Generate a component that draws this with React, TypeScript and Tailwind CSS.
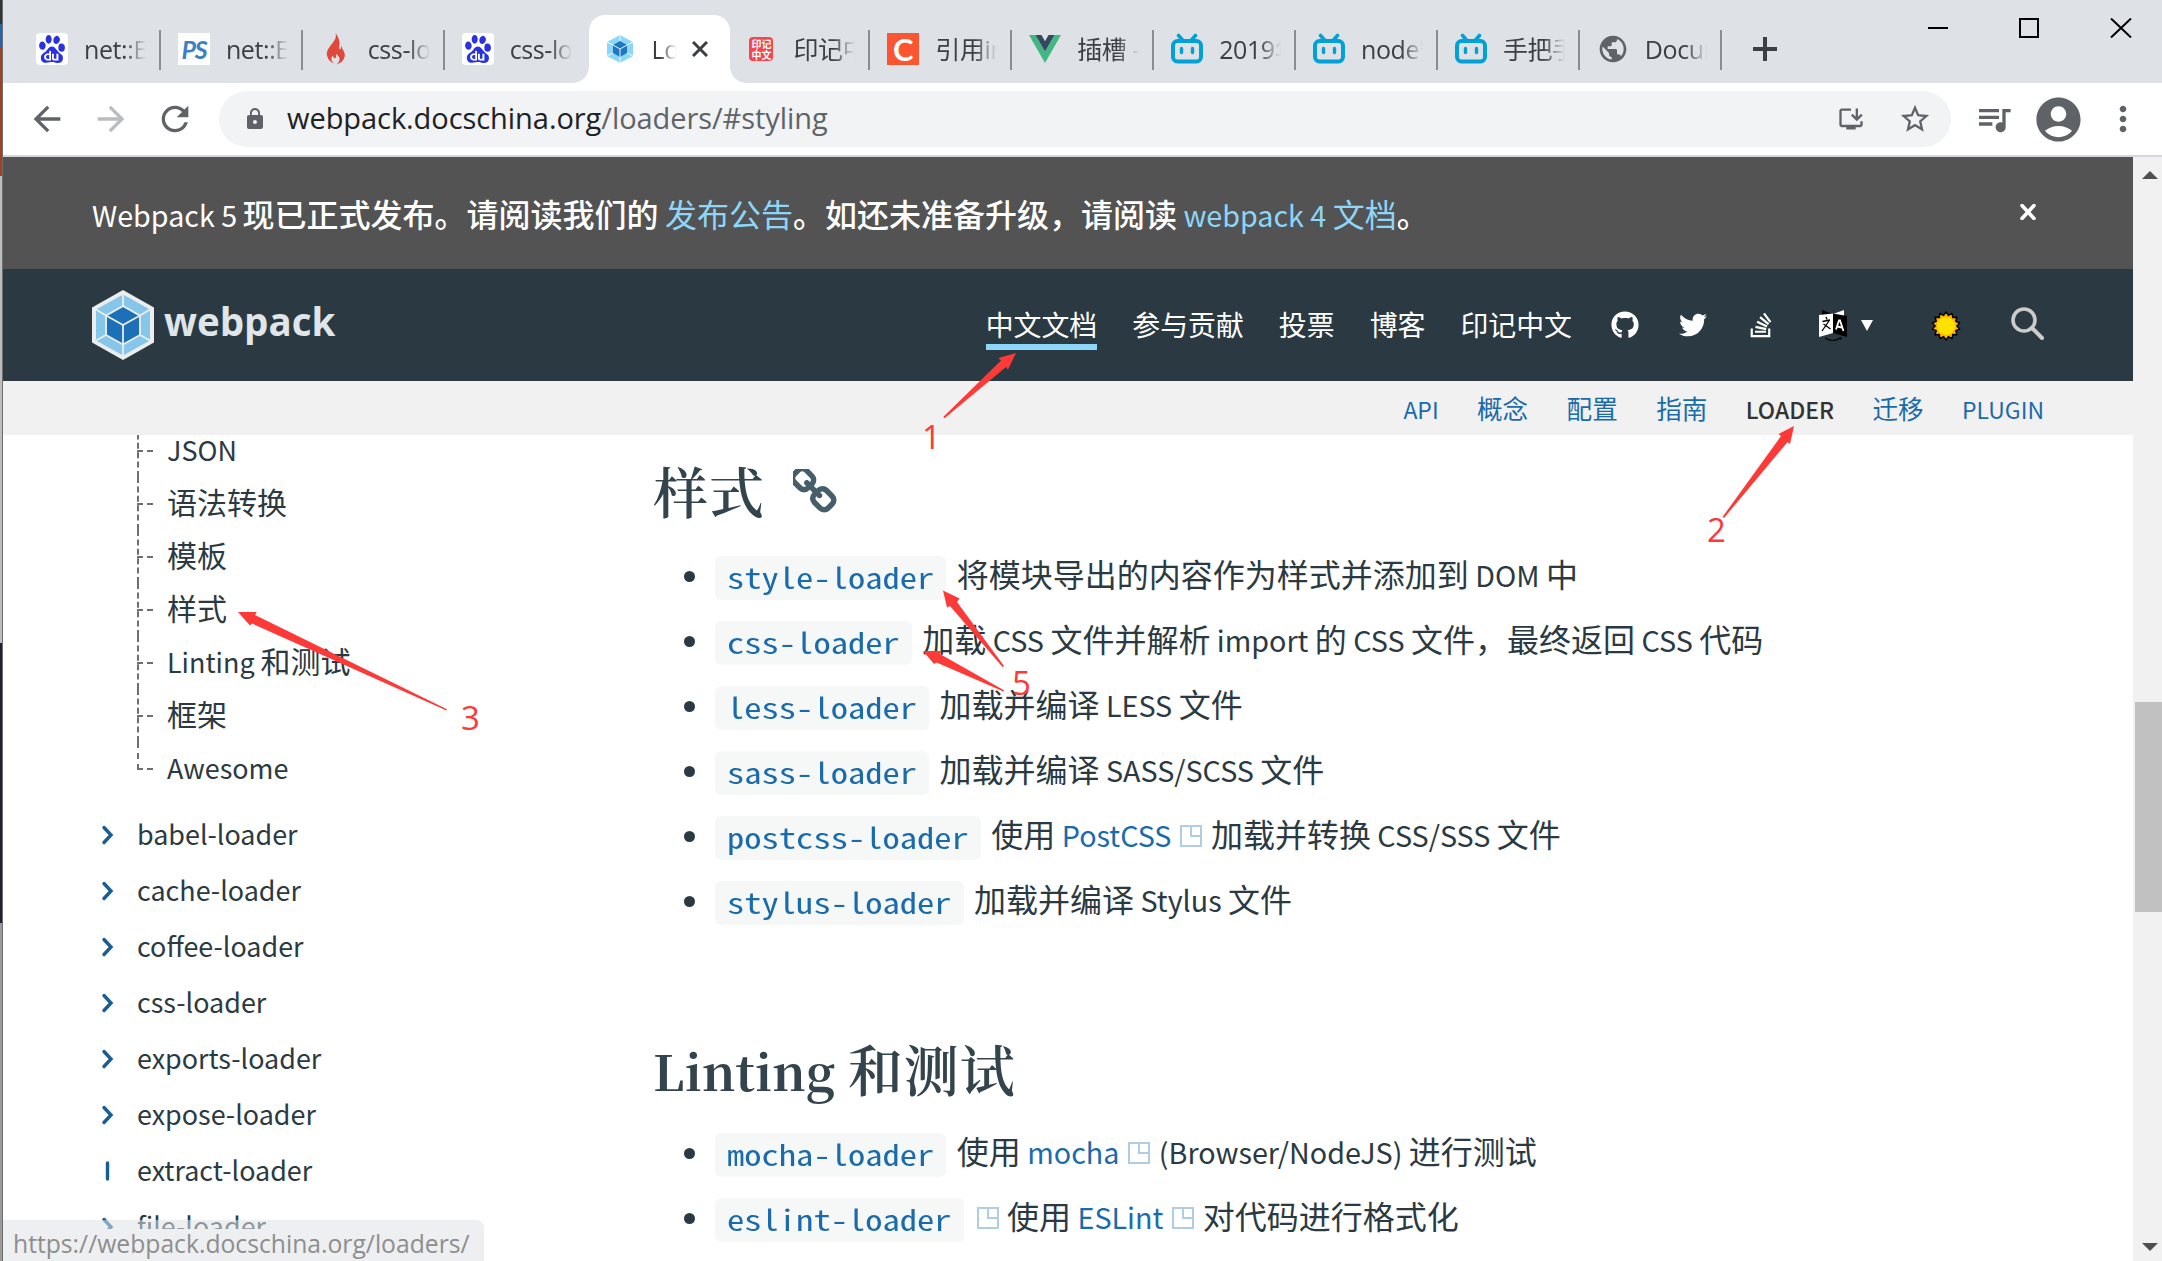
import React from "react";
import {
  MdArrowBack,
  MdArrowForward,
  MdRefresh,
  MdLock,
  MdInstallDesktop,
  MdStarBorder,
  MdQueueMusic,
  MdAccountCircle,
  MdMoreVert,
  MdPublic,
} from "react-icons/md";
import { FaGithub, FaTwitter, FaStackOverflow } from "react-icons/fa";
import { SiBaidu } from "react-icons/si";

const ARROW = "#fd3a37";

/* Latin runs are set a little smaller than the CJK glyphs around them. */
function Mix({ children }: { children: string }) {
  const parts = children.split(/([\x20-\x7e]+)/).filter(Boolean);
  return (
    <>
      {parts.map((p, i) =>
        /^[\x20-\x7e]/.test(p) ? (
          <span key={i} className="whitespace-pre text-[0.897em]">
            {p}
          </span>
        ) : (
          <span key={i}>{p}</span>
        ),
      )}
    </>
  );
}

function WebpackCube({ className, rim }: { className: string; rim: string }) {
  return (
    <svg viewBox="0 0 62 70" className={className} preserveAspectRatio="none">
      <path d="M31 0L62 17.5V52.5L31 70L0 52.5V17.5Z" fill={rim} />
      <path d="M31 4.5L58 19.5V50.5L31 65.5L4 50.5V19.5Z" fill="#86c6e9" />
      <path d="M31 17L47 26V45L31 54L15 45V26Z" fill="#1c70b7" />
      <g stroke={rim} strokeWidth="1.8" fill="none">
        <path d="M31 16L48 25.5V45L31 54.5L14 45V25.5Z" />
        <path d="M31 4V16M31 54V66M4 19.5L14 25.5L31 35L48 25.5L58 19.5M31 35V54M4 50.5L14 45M58 50.5L48 45" />
      </g>
    </svg>
  );
}

function WebpackFavicon() {
  return (
    <svg viewBox="0 0 26 28" className="h-7 w-[26px]">
      <path d="M13 0L26 7V21L13 28L0 21V7Z" fill="#8dd6f9" />
      <path d="M13 6L20 10V18L13 22L6 18V10Z" fill="#1c78c0" />
      <path d="M13 0V6M13 22V28M0 7L6 10L13 14L20 10L26 7M13 14V22M0 21L6 18M26 21L20 18" stroke="white" strokeWidth="0.9" fill="none" />
    </svg>
  );
}

function BilibiliIcon() {
  return (
    <svg viewBox="0 0 32 32" className="h-8 w-8" fill="none" stroke="#00a1d6">
      <rect x="2" y="8" width="28" height="20.5" rx="4.5" strokeWidth="4" />
      <path d="M7.5 2.5L11.5 7M24.500 2.500L20.500 7" strokeWidth="3.600" strokeLinecap="round" />
      <path d="M10.500 15.500V19.500M21.500 15.500V19.500" strokeWidth="3.400" strokeLinecap="round" />
    </svg>
  );
}

function VueIcon() {
  return (
    <svg viewBox="0 0 32 28" className="h-7 w-8">
      <path d="M0 0H6.500L16 16.500L25.500 0H32L16 28Z" fill="#41b883" />
      <path d="M6.500 0H12.500L16 6.200L19.500 0H25.500L16 16.500Z" fill="#35495e" />
    </svg>
  );
}

function BaiduIcon() {
  return (
    <span className="flex h-8 w-8 items-center justify-center rounded bg-white">
      <SiBaidu className="h-7 w-7 text-[#2932e1]" />
    </span>
  );
}

type Tab = { icon: React.ReactNode; title: string; active?: boolean; sep?: boolean };

const tabs: Tab[] = [
  { icon: <BaiduIcon />, title: "net::ERR", sep: true },
  {
    icon: (
      <span className="flex h-8 w-8 items-center justify-center bg-white font-['Lato',sans-serif] text-[25px] font-bold leading-none tracking-tighter text-[#3a80c3] italic">
        PS
      </span>
    ),
    title: "net::ERR",
    sep: true,
  },
  {
    icon: (
      <svg viewBox="0 0 20 32" className="h-8 w-5" fill="#e0483e">
        <path d="M9.500 0C11 5 8 8 5 12C1 17 0 20 1.500 24C2.500 27 5 29.500 8 30.500C5 28 4.500 25 7 22.500C7 24.500 8.500 25.500 9.500 25C11 24 9.500 22.500 10.500 20.500C11 22.500 14 23.500 13.500 26.500C13.300 28.500 12 30 10.500 31.500C15 30 18.500 27 18.800 22.500C19 18 16 17 15.500 13C14.500 14 15 15.500 14.500 16.500C12 16 14 12.500 13.500 9C13 5 11 2 9.500 0Z" />
      </svg>
    ),
    title: "css-loader",
    sep: true,
  },
  { icon: <BaiduIcon />, title: "css-loader" },
  { icon: <WebpackFavicon />, title: "Loader", active: true },
  {
    icon: (
      <span className="flex h-6 w-6 flex-col items-center justify-center rounded-sm bg-[#f8454d] font-['Noto_Sans_CJK_SC',sans-serif] text-[10px] font-bold leading-[11px] text-white">
        <span>印记</span>
        <span>中文</span>
      </span>
    ),
    title: "印记中文",
    sep: true,
  },
  {
    icon: (
      <span className="flex h-8 w-8 items-center justify-center bg-[#fc5531] font-['Lato',sans-serif] text-[31px] font-bold leading-none text-white">
        C
      </span>
    ),
    title: "引用import",
    sep: true,
  },
  { icon: <VueIcon />, title: "插槽 — Vue", sep: true },
  { icon: <BilibiliIcon />, title: "2019年", sep: true },
  { icon: <BilibiliIcon />, title: "node安装", sep: true },
  { icon: <BilibiliIcon />, title: "手把手教", sep: true },
  { icon: <MdPublic className="h-[34px] w-[34px] text-[#5f6368]" />, title: "Docum", sep: true },
];

function TabItem({ tab }: { tab: Tab }) {
  return (
    <div
      className={
        tab.active
          ? "relative flex h-[68px] w-[141.9px] shrink-0 items-center self-end rounded-t-2xl bg-white pl-[15px]"
          : "relative flex h-[68px] w-[141.9px] shrink-0 items-center self-end pl-[15px]"
      }
    >
      {tab.active && (
        <>
          <span className="absolute bottom-0 -left-4 h-4 w-4 bg-[radial-gradient(circle_at_0_0,transparent_15.5px,white_16px)]" />
          <span className="absolute bottom-0 -right-4 h-4 w-4 bg-[radial-gradient(circle_at_100%_0,transparent_15.5px,white_16px)]" />
        </>
      )}
      <span className="flex h-8 w-8 shrink-0 items-center justify-center">{tab.icon}</span>
      <span
        className={
          tab.active
            ? "ml-4 w-[26px] overflow-hidden whitespace-nowrap text-[25px] leading-9 tracking-[-0.4px] text-[#3c4043] [mask-image:linear-gradient(to_right,black_30%,transparent_95%)]"
            : "ml-4 w-[62px] overflow-hidden whitespace-nowrap text-[25px] leading-9 tracking-[-0.4px] text-[#3c4043] [mask-image:linear-gradient(to_right,black_65%,transparent_100%)]"
        }
      >
        {tab.title}
      </span>
      {tab.active && (
        <svg viewBox="0 0 16 16" className="ml-3.5 h-4 w-4" stroke="#3c4043" strokeWidth="3">
          <path d="M1 1L15 15M15 1L1 15" />
        </svg>
      )}
      {tab.sep && <span className="absolute top-[15px] right-0.5 h-10 w-0.5 bg-[#8a8d92]" />}
    </div>
  );
}

function TabStrip() {
  return (
    <div className="flex h-[83px] bg-[#dee1e6] pl-[18px] font-['Open_Sans','Noto_Sans_CJK_SC',sans-serif]">
      {tabs.map((t, i) => (
        <TabItem key={i} tab={t} />
      ))}
      <svg viewBox="0 0 24 24" className="mt-[37px] ml-[29px] h-6 w-6" stroke="#3c4043" strokeWidth="4">
        <path d="M12 0V24M0 12H24" />
      </svg>
      <svg
        viewBox="0 0 204 20"
        className="mt-[18px] mr-[30px] ml-auto h-5 w-[204px]"
        fill="none"
        stroke="black"
        strokeWidth="2"
      >
        <path d="M0 10H20" />
        <rect x="92" y="1" width="18" height="18" />
        <path d="M183 0.500L203 19.500M203 0.500L183 19.500" />
      </svg>
    </div>
  );
}

function Toolbar() {
  return (
    <div className="flex h-[72px] items-center bg-white pl-6">
      <MdArrowBack className="h-10 w-10 text-[#5f6368]" />
      <MdArrowForward className="ml-6 h-10 w-10 text-[#babcbe]" />
      <MdRefresh className="ml-6 h-10 w-10 text-[#5f6368]" />
      <div className="ml-6 flex h-14 w-[1732px] items-center rounded-full bg-[#f1f3f4] pl-6">
        <MdLock className="h-6 w-6 text-[#5f6368]" />
        <div className="ml-5 pb-0.5 font-['Open_Sans',sans-serif] text-[29px] leading-10 tracking-[-0.06px] text-[#202124]">
          webpack.docschina.org<span className="text-[#5f6368]">/loaders/#styling</span>
        </div>
        <MdInstallDesktop className="ml-auto h-7 w-7 text-[#5f6368]" />
        <MdStarBorder className="mr-[19px] ml-[33px] h-[34px] w-[34px] text-[#5f6368]" />
      </div>
      <MdQueueMusic className="ml-[23px] h-10 w-10 text-[#5f6368]" />
      <MdAccountCircle className="ml-[18px] h-[53px] w-[53px] text-[#5f6368]" />
      <MdMoreVert className="ml-[18px] h-10 w-10 text-[#5f6368]" />
    </div>
  );
}

function Banner() {
  return (
    <div className="flex h-28 items-center bg-[#535353] pr-[97px] pl-[89px] text-[32px] leading-[48px] text-white">
      <div className="whitespace-pre pt-0.5">
        <Mix>Webpack 5 </Mix>
        <span className="-ml-px font-medium">现已正式发布。请阅读我们的</span>
        <Mix> </Mix>
        <span className="text-[#8dd6f9]">发布公告</span>
        <span className="font-medium">。如还未准备升级，请阅读</span>
        <Mix> </Mix>
        <span className="text-[#8dd6f9]">
          <Mix>webpack 4 文档</Mix>
        </span>
        <span className="font-medium">。</span>
      </div>
      <svg viewBox="0 0 16 16" className="mb-0.5 ml-auto h-4 w-4" stroke="white" strokeWidth="3.600" strokeLinecap="round">
        <path d="M2 1.500L14 14.500M14 1.500L2 14.500" />
      </svg>
    </div>
  );
}

function TranslateIcon() {
  return (
    <svg viewBox="0 0 28 32" className="h-8 w-7">
      <path d="M3 1L14 5V9L3 8Z" fill="black" />
      <path d="M25 1L14 5L18 7L25 8Z" fill="white" />
      <path d="M0 6L14 4.500V24L0 28Z" fill="white" />
      <path d="M14 4.500L28 7V28L14 24Z" fill="black" />
      <path d="M7 8L8 10.500M3.500 12.500L11 11M10 12L3 22M4.500 15L11.500 20" stroke="black" strokeWidth="1.300" fill="none" />
      <path d="M17 20.500L20 11.500H21L24.500 22M18 17.500L23 18.500" stroke="white" strokeWidth="1.800" fill="none" />
      <path d="M6 29Q14 34 21 29" stroke="black" strokeWidth="1.200" fill="none" />
      <path d="M19 29L23 28L22 31Z" fill="black" />
    </svg>
  );
}

function SunIcon() {
  const pts = Array.from({ length: 28 }, (_, i) => {
    const r = i % 2 ? 10.8 : 14;
    const a = (i * Math.PI) / 14;
    return `${15 + r * Math.sin(a)},${15 - r * Math.cos(a)}`;
  }).join(" ");
  return (
    <svg viewBox="0 0 30 30" className="h-[30px] w-[30px]">
      <polygon points={pts} fill="#ffb300" stroke="black" strokeWidth="1.400" strokeLinejoin="round" />
      <circle cx="15" cy="15" r="9" fill="#ffe100" />
    </svg>
  );
}

function SiteHeader() {
  return (
    <div className="flex h-28 items-center bg-[#2b3a42] pr-[89px] pl-[89px] text-white">
      <WebpackCube className="h-[70px] w-[62px]" rim="#ecedee" />
      <span className="ml-2.5 pb-2 font-['Open_Sans',sans-serif] text-[38.5px] leading-[50px] font-bold text-[#dfe5e8]">
        webpack
      </span>
      <div className="ml-auto flex items-center text-[27.9px] leading-10">
        <div className="mb-0.5 flex h-20 items-center gap-[35px]">
          <span className="mt-1.5 border-b-[6px] border-[#8dd6f9]">中文文档</span>
          <span>参与贡献</span>
          <span>投票</span>
          <span>博客</span>
          <span>印记中文</span>
        </div>
        <FaGithub className="ml-[39px] h-7 w-7" />
        <FaTwitter className="ml-10 h-7 w-7" />
        <FaStackOverflow className="ml-[40px] h-7 w-7" />
        <span className="ml-[44px]">
          <TranslateIcon />
        </span>
        <svg viewBox="0 0 12 11" className="ml-3.5 h-[11px] w-3 fill-white">
          <path d="M0 0H12L6 11Z" />
        </svg>
        <span className="mt-0.5 ml-[58px]">
          <SunIcon />
        </span>
        <svg viewBox="0 0 33 33" className="mb-1 ml-[50px] h-[33px] w-[33px]" fill="none" stroke="#cccccc">
          <circle cx="13" cy="13" r="11" strokeWidth="3.600" />
          <path d="M21 21L31 31" strokeWidth="4" strokeLinecap="round" />
        </svg>
      </div>
    </div>
  );
}

function SubNav() {
  const items = ["API", "概念", "配置", "指南", "LOADER", "迁移", "PLUGIN"];
  return (
    <div className="flex h-[54px] items-center justify-end gap-[38.4px] bg-[#f1f1f1] pr-[89px] text-[25.6px] leading-10 text-[#1a6bac]">
      {items.map((t) => (
        <span key={t} className={t === "LOADER" ? "font-medium text-[#333333]" : ""}>
          <Mix>{t}</Mix>
        </span>
      ))}
    </div>
  );
}

const anchors = ["JSON", "语法转换", "模板", "样式", "Linting 和测试", "框架", "Awesome"];
const loaders = ["babel", "cache", "coffee", "css", "exports", "expose", "extract", "file"];

function Sidebar() {
  return (
    <div className="h-[794px] w-[560px] shrink-0 overflow-hidden pl-[98px] text-[30px] text-[#2b3a42]">
      <div className="-mt-[11px] ml-9">
        {anchors.map((a, i) => (
          <div key={a} className="flex h-[53px]">
            <div
              className={
                i === anchors.length - 1
                  ? "flex h-[28px] w-[15px] items-end border-l-2 border-dashed border-[#6f6f6f]"
                  : "flex h-[53px] w-[15px] items-end border-l-2 border-dashed border-[#6f6f6f] pb-[25px]"
              }
            >
              <span className="-ml-0.5 w-4 shrink-0 border-t-2 border-dashed border-[#6f6f6f]" />
            </div>
            <span className="ml-[15px] whitespace-nowrap leading-[49px]">
              <Mix>{a}</Mix>
            </span>
          </div>
        ))}
      </div>
      <div className="mt-[10px]">
        {loaders.map((l) => (
          <div key={l} className="flex h-14 items-center">
            <svg
              viewBox="0 0 14 20"
              className="mt-1 h-5 w-3.5"
              fill="none"
              stroke="#175d96"
              strokeWidth="3.400"
              strokeLinecap="round"
            >
              <path d={l === "extract" ? "M6.500 2V18" : "M3 2.500L10 10L3 17.500"} />
            </svg>
            <span className="ml-[22px] leading-[56px]">
              <Mix>{l + "-loader"}</Mix>
            </span>
          </div>
        ))}
      </div>
    </div>
  );
}

/* The half-width mono face is stretched to a 0.6em advance. */
function Code({ children }: { children: string }) {
  return (
    <code className="mr-1 inline-block h-11 rounded-md bg-[#f6f8f8] px-3 align-[-2px] font-['Noto_Sans_Mono_CJK_SC','DejaVu_Sans_Mono',monospace] text-[28.8px] leading-[41px] text-[#1a6bac]">
      <span className="inline-block" style={{ width: children.length * 17.28 }}>
        <span className="inline-block origin-left scale-x-120">{children}</span>
      </span>
    </code>
  );
}

function Ext({ children }: { children?: string }) {
  return (
    <span className="whitespace-pre text-[#1a6bac]">
      {children && <Mix>{children}</Mix>}
      <svg viewBox="0 0 22 22" className="mr-0.5 ml-[9px] inline-block h-[22px] w-[22px] align-baseline" fill="none" stroke="#b0cde4" strokeWidth="2">
        <path d="M1 1H21V21H1ZM11 1V11H21" />
      </svg>
    </span>
  );
}

function Item({ children }: { children: React.ReactNode }) {
  return (
    <li className="flex h-[65px] items-center">
      <span className="mt-px ml-[31px] h-[11px] w-[11px] rounded-full bg-[#2b3a42]" />
      <span className="ml-[20px] h-[65px] whitespace-pre leading-[61px]">{children}</span>
    </li>
  );
}

function Content() {
  return (
    <div className="w-[1480px] pl-[90px] text-[32px] text-[#2b3a42]">
      <h2 className="mt-[18px] flex h-[74px] items-center font-['Noto_Serif_CJK_SC','Noto_Serif','Liberation_Serif','Noto_Sans_CJK_SC',serif] text-[55px] leading-[74px] font-semibold tracking-[1px] text-[#34444c]">
        样式
        <svg viewBox="128 128 1536 1536" className="mt-0.5 ml-[28px] h-11 w-11" fill="#465e69">
          <path d="M1456 1216q0-40-28-68l-208-208q-28-28-68-28-42 0-72 32 3 3 19 18.500t21.500 21.500 15 19 13 25.500 3.500 27.500q0 40-28 68t-68 28q-15 0-27.500-3.500t-25.500-13-19-15-21.500-21.500-18.500-19q-33 31-33 73 0 40 28 68l206 207q27 27 68 27 40 0 68-26l147-146q28-28 28-67zm-703-705q0-40-28-68l-206-207q-28-28-68-28-39 0-68 27l-147 146q-28 28-28 67 0 40 28 68l208 208q27 27 68 27 42 0 72-31-3-3-19-18.500t-21.500-21.500-15-19-13-25.500-3.500-27.500q0-40 28-68t68-28q15 0 27.500 3.500t25.500 13 19 15 21.500 21.500 18.500 19q33-31 33-73zm895 705q0 120-85 203l-147 146q-83 83-203 83-121 0-204-85l-206-207q-83-83-83-203 0-123 88-209l-88-88q-86 88-208 88-120 0-204-84l-208-208q-84-84-84-204t85-203l147-146q83-83 203-83 121 0 204 85l206 207q83 83 83 203 0 123-88 209l88 88q86-88 208-88 120 0 204 84l208 208q84 84 84 204z" />
        </svg>
      </h2>
      <ul className="mt-[16px]">
        <Item>
          <Code>style-loader</Code>
          <Mix> 将模块导出的内容作为样式并添加到 DOM 中</Mix>
        </Item>
        <Item>
          <Code>css-loader</Code>
          <Mix> 加载 CSS 文件并解析 import 的 CSS 文件，最终返回 CSS 代码</Mix>
        </Item>
        <Item>
          <Code>less-loader</Code>
          <Mix> 加载并编译 LESS 文件</Mix>
        </Item>
        <Item>
          <Code>sass-loader</Code>
          <Mix> 加载并编译 SASS/SCSS 文件</Mix>
        </Item>
        <Item>
          <Code>postcss-loader</Code>
          <Mix> 使用 </Mix>
          <Ext>PostCSS</Ext>
          <Mix> 加载并转换 CSS/SSS 文件</Mix>
        </Item>
        <Item>
          <Code>stylus-loader</Code>
          <Mix> 加载并编译 Stylus 文件</Mix>
        </Item>
      </ul>
      <h2 className="mt-[98px] h-[74px] whitespace-pre font-['Noto_Serif_CJK_SC','Noto_Serif','Liberation_Serif','Noto_Sans_CJK_SC',serif] text-[55px] leading-[74px] font-semibold tracking-[0.9px] text-[#34444c]">
        <span className="text-[49px] font-bold tracking-[0.2px]">Linting </span>
        和测试
      </h2>
      <ul className="mt-[15px]">
        <Item>
          <Code>mocha-loader</Code>
          <Mix> 使用 </Mix>
          <Ext>mocha</Ext>
          <Mix> (Browser/NodeJS) 进行测试</Mix>
        </Item>
        <Item>
          <Code>eslint-loader</Code>
          <Ext />
          <Mix> 使用 </Mix>
          <Ext>ESLint</Ext>
          <Mix> 对代码进行格式化</Mix>
        </Item>
      </ul>
    </div>
  );
}

function ScrollBar() {
  return (
    <div className="flex w-[29px] shrink-0 flex-col bg-[#f1f1f1]">
      <svg viewBox="0 0 16 8" className="mt-3.5 ml-[9px] h-2 w-4 fill-[#505050]">
        <path d="M8 0L16 8H0Z" />
      </svg>
      <div className="mt-[523px] ml-0.5 h-[210px] bg-[#c1c1c1]" />
      <svg viewBox="0 0 16 8" className="mt-auto mb-2.5 ml-[9px] h-2 w-4 fill-[#505050]">
        <path d="M0 0H16L8 8Z" />
      </svg>
    </div>
  );
}

function Annotations() {
  return (
    <>
      <svg viewBox="0 0 2162 1261" className="pointer-events-none absolute inset-0 h-full w-full" fill={ARROW}>
        <path d="M1016 353L998.400 358L1001 360.500L943.200 417L944.500 418.200L1006 367L1008 369.500Z" />
        <path d="M1794 426L1778.500 434L1781 436L1722.500 517L1724 518L1787.600 442L1790 444Z" />
        <path d="M238 612L256.700 612L255 615L447 709.200L446.500 710.500L252 623.500L250 625.500Z" />
        <path d="M943 590.500L959.600 598.500L957 602L1004 666L1002.500 667L950 606L947 607.500Z" />
        <path d="M923 651L941 651L940 654L1004 690.200L1003.500 691.500L936.600 662.500L934 664Z" />
      </svg>
      <div className="pointer-events-none absolute inset-0 font-['Open_Sans',sans-serif] text-[33px] leading-[40px] text-[#fd3a37]">
        <span className="absolute top-[417px] left-[922px]">1</span>
        <span className="absolute top-[510px] left-[1707px]">2</span>
        <span className="absolute top-[698px] left-[461px]">3</span>
        <span className="absolute top-[663px] left-[1012px]">5</span>
      </div>
    </>
  );
}

export default function App() {
  return (
    <div className="relative flex h-[1261px] w-[2162px] overflow-hidden bg-white font-['Noto_Sans_CJK_SC',sans-serif]">
      <div className="flex w-[3px] shrink-0 flex-col border-r border-[#6d6d6d]">
        <div className="h-[24px] bg-[#303438]" />
        <div className="h-[23px] bg-[#2166ac]" />
        <div className="h-[129px] bg-[#a5401f]" />
        <div className="h-[467px] bg-[#bdbdbd]" />
        <div className="h-[280px] bg-[#20212b]" />
        <div className="grow bg-[#9a9a9a]" />
      </div>
      <div className="flex w-[2159px] shrink-0 flex-col">
        <TabStrip />
        <Toolbar />
        <div className="h-0.5 bg-[#d5d7dc]" />
        <div className="flex grow">
          <div className="w-[2130px] shrink-0">
            <Banner />
            <SiteHeader />
            <SubNav />
            <div className="flex h-[826px] overflow-hidden">
              <Sidebar />
              <Content />
            </div>
          </div>
          <ScrollBar />
        </div>
      </div>
      <div className="absolute bottom-0 left-[3px] h-[41px] w-[481px] rounded-tr-lg bg-[#dee1e6]/55 pl-2.5 font-['Open_Sans',sans-serif] text-[24.7px] leading-[48px] text-[#8e8e8e]">
        https://webpack.docschina.org/loaders/
      </div>
      <Annotations />
    </div>
  );
}
